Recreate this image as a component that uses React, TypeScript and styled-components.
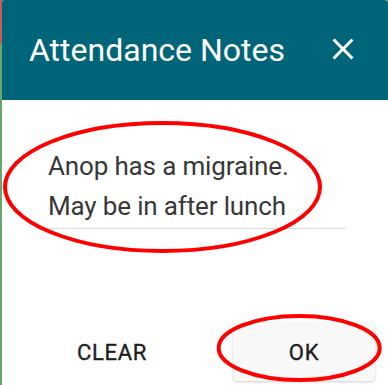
import React from "react";
import styled, { createGlobalStyle } from "styled-components";

const GlobalStyle = createGlobalStyle`
  html, body {
    margin: 0;
    padding: 0;
    width: 388px;
    height: 385px;
    overflow: hidden;
    background: #6aa46e;
  }
  * { box-sizing: border-box; }
`;

const Page = styled.div`
  position: relative;
  display: flex;
  width: 388px;
  height: 385px;
  overflow: hidden;
  background: #6aa46e;
  font-family: Roboto, "Liberation Sans", Arial, sans-serif;
`;

const Strip = styled.div`
  flex: 0 0 2px;
  display: flex;
  flex-direction: column;
`;

const StripTop = styled.div`
  height: 44px;
  background: #c85a5a;
`;

const Dialog = styled.div`
  flex: 0 0 386px;
  height: 420px;
  display: flex;
  flex-direction: column;
  background: #ffffff;
  border-radius: 2px 4px 0 0;
  overflow: hidden;
`;

const Header = styled.div`
  flex: 0 0 100px;
  display: flex;
  align-items: center;
  justify-content: space-between;
  padding: 0 27px 0 27px;
  background: #01657a;
`;

const Title = styled.h2`
  margin: 0;
  font-size: 32px;
  line-height: 1;
  font-weight: 400;
  color: #ffffff;
`;

const CloseButton = styled.button`
  width: 36px;
  height: 36px;
  padding: 0;
  margin-top: -3px;
  border: none;
  background: transparent;
  display: flex;
  align-items: center;
  justify-content: center;
  cursor: pointer;
`;

const Body = styled.div`
  padding: 46px 0 0 46px;
`;

const Note = styled.div`
  width: 298px;
  padding-bottom: 2px;
  border-bottom: 1px solid #dcdcdc;
  font-size: 26px;
  line-height: 40px;
  letter-spacing: -0.15px;
  color: #383838;
`;

const Footer = styled.div`
  display: flex;
  align-items: center;
  gap: 50px;
  padding: 94px 13px 0 39px;
`;

const ActionButton = styled.button<{ $raised?: boolean }>`
  width: 142px;
  height: 58px;
  border: none;
  border-radius: 4px;
  font-family: Roboto, "Liberation Sans", Arial, sans-serif;
  font-size: 22px;
  font-weight: 400;
  letter-spacing: 0.7px;
  color: #1e1e1e;
  -webkit-text-stroke: 0.35px #1e1e1e;
  text-transform: uppercase;
  background: ${(p) => (p.$raised ? "#f8f8f8" : "transparent")};
  box-shadow: ${(p) =>
    p.$raised ? "0 1px 3px rgba(0,0,0,0.18), 0 0 1px rgba(0,0,0,0.12)" : "none"};
  cursor: pointer;
`;

const Annotations = styled.svg`
  position: absolute;
  left: 0;
  top: 0;
  pointer-events: none;
`;

export default function App() {
  return (
    <>
      <GlobalStyle />
      <Page>
        <Strip>
          <StripTop />
        </Strip>
        <Dialog>
          <Header>
            <Title>Attendance Notes</Title>
            <CloseButton aria-label="Close">
              <svg width="36" height="36" viewBox="0 0 24 24">
                <path
                  d="M19 6.41L17.59 5 12 10.59 6.41 5 5 6.41 10.59 12 5 17.59 6.41 19 12 13.41 17.59 19 19 17.59 13.41 12z"
                  fill="#ffffff"
                />
              </svg>
            </CloseButton>
          </Header>
          <Body>
            <Note>
              Anop has a migraine.
              <br />
              May be in after lunch
            </Note>
          </Body>
          <Footer>
            <ActionButton>Clear</ActionButton>
            <ActionButton $raised>OK</ActionButton>
          </Footer>
        </Dialog>
        <Annotations width="388" height="385" viewBox="0 0 388 385">
          <ellipse cx="162.5" cy="187" rx="157.5" ry="64" fill="none" stroke="#ff0000" strokeWidth="4" />
          <ellipse cx="299.2" cy="348" rx="80.5" ry="32" fill="none" stroke="#ff0000" strokeWidth="4" />
        </Annotations>
      </Page>
    </>
  );
}
